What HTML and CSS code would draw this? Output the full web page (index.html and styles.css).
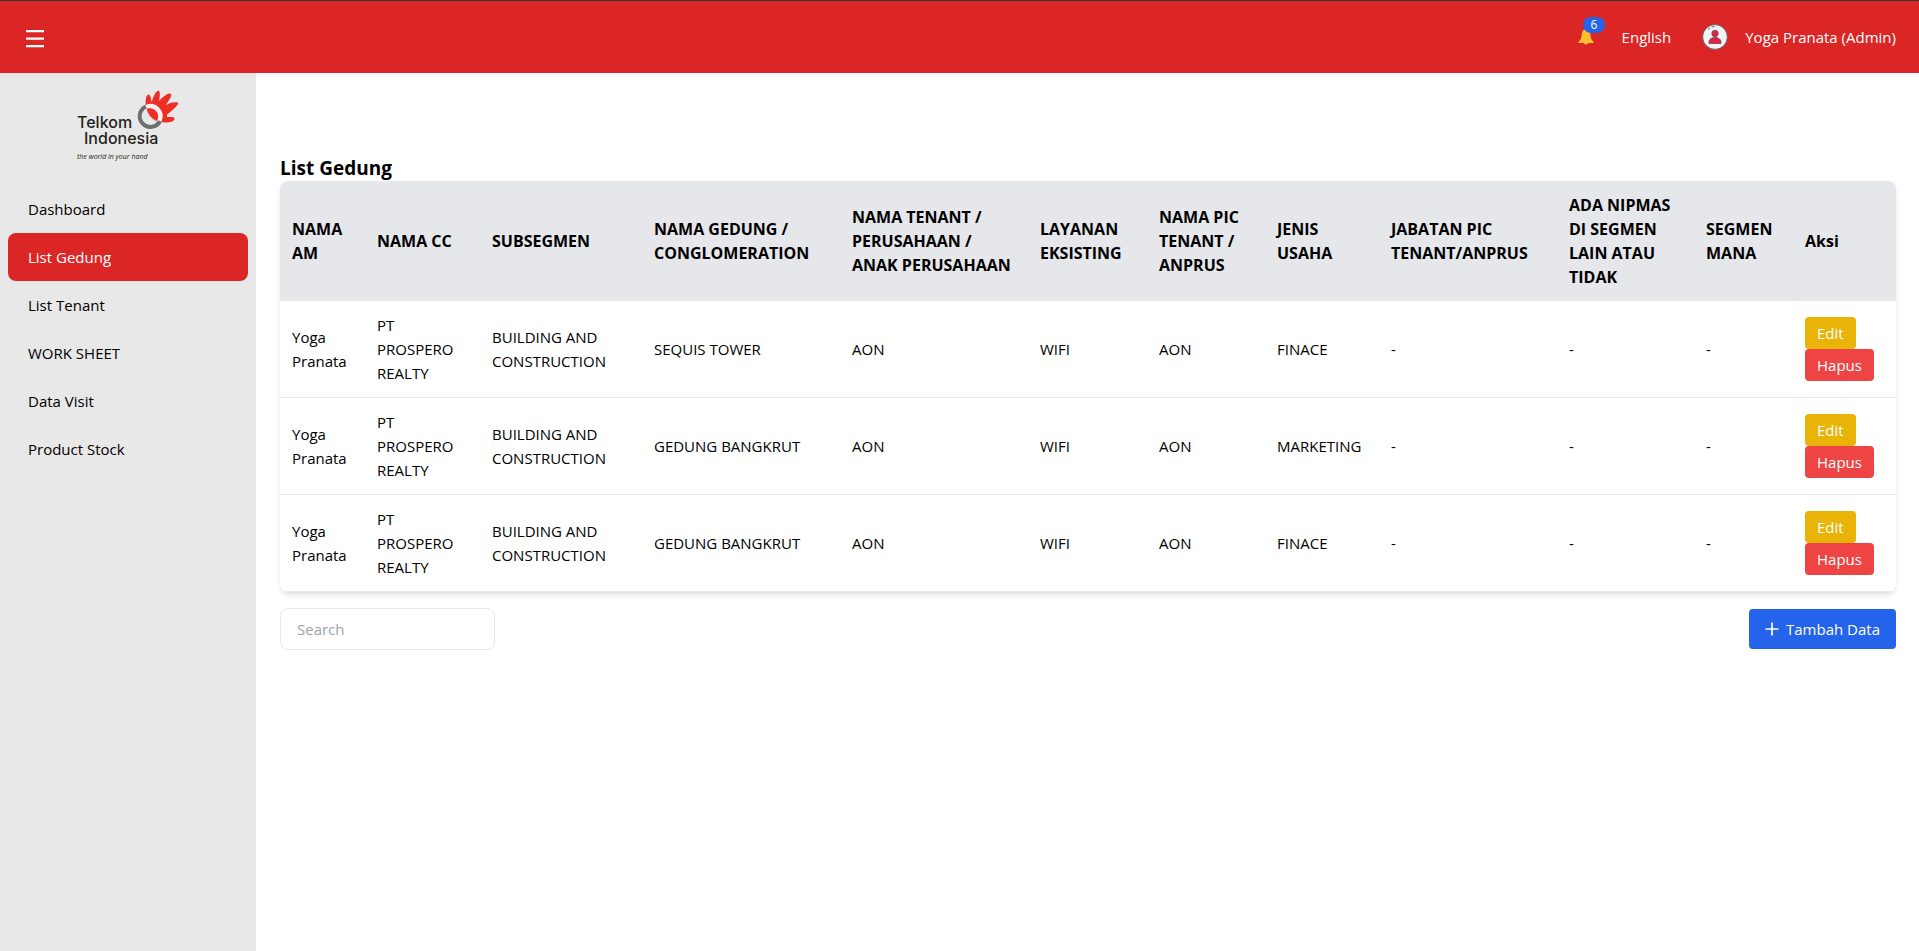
FILE: index.html
```html
<!DOCTYPE html>
<html lang="id">
<head>
<meta charset="utf-8">
<meta name="viewport" content="width=device-width, initial-scale=1">
<title>List Gedung</title>
<link rel="stylesheet" href="styles.css">
</head>
<body>
<header class="topbar">
  <button class="menu-button" type="button" aria-label="Menu">
    <svg width="18" height="18" viewBox="0 0 18 18" fill="#fff"><path d="M0 0h18v2.300H0zM0 7.500h18v2.300H0zM0 15h18v2.300H0z"/></svg>
  </button>
  <div class="topbar-right">
    <button class="bell" type="button" aria-label="Notifications">
      <svg width="16" height="16" viewBox="0 0 16 16"><path fill="#fbc02d" d="M8 0C5 .6 4 2.500 3.700 5.500 3.400 9 3 10.500.6 12.500V14h14.800v-1.500C13 10.500 12.600 9 12.300 5.500 12 2.500 11 .6 8 0z"/><path fill="#fbc02d" d="M6 14h4q-.4 1.500-2 1.500T6 14z"/></svg>
      <span class="badge">6</span>
    </button>
    <a class="topbar-link" href="#">English</a>
    <a class="user" href="#">
      <svg width="26" height="26" viewBox="0 0 26 26"><circle cx="13" cy="13" r="12.400" fill="#f3f3f3" stroke="#56545f" stroke-width=".9"/><path d="M6 5.500 8 4M9.500 3.200l3-.8" stroke="#56545f" stroke-width=".9" fill="none"/><g fill="#e91e43" stroke="#56545f" stroke-width=".8"><circle cx="13" cy="9.500" r="3.200"/><path d="M7 19.500v-1.200c0-3 2.400-4.800 6-4.800s6 1.800 6 4.800v1.200z"/></g></svg>
      <span>Yoga Pranata (Admin)</span>
    </a>
  </div>
</header>
<div class="layout">
  <aside class="sidebar">
    <svg class="logo" width="104" height="72" viewBox="0 0 104 72" role="img" aria-label="Telkom Indonesia">
      <path fill="#ee2d24" d="M69 17C68 11 69 5 71.500 4.500 74 5 73.500 9 74.700 12 76 8 78.500 1.500 81 .8 84 1 82.500 6 82.300 11 85 8 90.500 2.500 93.500 3.800 96 5 92 10 89 15 92 13 97.500 11.500 101 12.500 102 14.500 96.500 19.500 90 24.500V27C93 27 98 26.500 97.500 29 96.500 32.500 89 33 83.500 32L76 22z"/>
      <circle cx="73.500" cy="26" r="11" fill="#f3f3f3"/>
      <circle cx="73.500" cy="26" r="8.800" fill="#e8e8e8"/>
      <path d="M69 16.500A10.700 10.700 0 1 0 83 31" fill="none" stroke="#6d6e71" stroke-width="4"/>
      <path d="M69 16.500A10.700 10.700 0 0 1 83 31" fill="none" stroke="#f3f3f3" stroke-width="3"/>
      <path fill="#ee2d24" d="M69.500 18.500Q77 17 80.500 23 82 28 79.500 31 72 28 69.500 18.500z"/>
      <text class="logo-name" x="0" y="38">Telkom</text>
      <text class="logo-name" x="7" y="54">Indonesia</text>
      <text class="logo-tag" x="0" y="69">the world in your hand</text>
    </svg>
    <nav class="nav">
      <a href="#">Dashboard</a>
      <a class="active" href="#" aria-current="page">List Gedung</a>
      <a href="#">List Tenant</a>
      <a href="#">WORK SHEET</a>
      <a href="#">Data Visit</a>
      <a href="#">Product Stock</a>
    </nav>
  </aside>
  <main class="content">
    <h1 class="title">List Gedung</h1>
    <div class="card">
      <table class="table">
        <colgroup>
          <col class="c-am"><col class="c-cc"><col class="c-sub"><col class="c-gedung"><col class="c-tenant"><col class="c-layanan"><col class="c-pic"><col class="c-jenis"><col class="c-jabatan"><col class="c-nipmas"><col class="c-segmen"><col class="c-aksi">
        </colgroup>
        <thead>
          <tr><th>NAMA AM</th><th>NAMA CC</th><th>SUBSEGMEN</th><th>NAMA GEDUNG / CONGLOMERATION</th><th>NAMA TENANT / PERUSAHAAN /<br>ANAK PERUSAHAAN</th><th>LAYANAN EKSISTING</th><th>NAMA PIC TENANT / ANPRUS</th><th>JENIS USAHA</th><th>JABATAN PIC TENANT/ANPRUS</th><th>ADA NIPMAS DI SEGMEN LAIN ATAU TIDAK</th><th>SEGMEN MANA</th><th>Aksi</th></tr>
        </thead>
        <tbody>
          <tr><td>Yoga Pranata</td><td>PT PROSPERO REALTY</td><td>BUILDING AND CONSTRUCTION</td><td>SEQUIS TOWER</td><td>AON</td><td>WIFI</td><td>AON</td><td>FINACE</td><td>-</td><td>-</td><td>-</td><td><div class="actions"><button class="btn edit" type="button">Edit</button><button class="btn delete" type="button">Hapus</button></div></td></tr>
          <tr><td>Yoga Pranata</td><td>PT PROSPERO REALTY</td><td>BUILDING AND CONSTRUCTION</td><td>GEDUNG BANGKRUT</td><td>AON</td><td>WIFI</td><td>AON</td><td>MARKETING</td><td>-</td><td>-</td><td>-</td><td><div class="actions"><button class="btn edit" type="button">Edit</button><button class="btn delete" type="button">Hapus</button></div></td></tr>
          <tr><td>Yoga Pranata</td><td>PT PROSPERO REALTY</td><td>BUILDING AND CONSTRUCTION</td><td>GEDUNG BANGKRUT</td><td>AON</td><td>WIFI</td><td>AON</td><td>FINACE</td><td>-</td><td>-</td><td>-</td><td><div class="actions"><button class="btn edit" type="button">Edit</button><button class="btn delete" type="button">Hapus</button></div></td></tr>
        </tbody>
      </table>
    </div>
    <div class="footer-row">
      <input class="search" type="text" placeholder="Search" aria-label="Search">
      <button class="add" type="button">
        <svg width="14" height="14" viewBox="0 0 14 14"><path d="M7 .5v13M.5 7h13" stroke="#fff" stroke-width="1.700"/></svg>
        <span>Tambah Data</span>
      </button>
    </div>
  </main>
</div>
</body>
</html>
```
FILE: styles.css
```css
* { box-sizing: border-box; }

body {
  margin: 0;
  min-height: 100vh;
  display: flex;
  flex-direction: column;
  background: #fff;
  color: #000;
  font: 15px/24px "Segoe UI", "Open Sans", "Noto Sans", sans-serif;
}

button, input { font: inherit; }
button { border: 0; cursor: pointer; }
a { color: inherit; text-decoration: none; }
svg { display: block; flex: none; }

.topbar {
  display: flex;
  align-items: center;
  justify-content: space-between;
  height: 73px;
  padding: 0 23px 0 26px;
  border-top: 1px solid #333;
  background: #dc2626;
  color: #fff;
}

.menu-button { padding: 3px 0 0; background: none; }
.topbar-right { display: flex; align-items: center; }

.bell {
  position: relative;
  margin-right: 28px;
  padding: 0;
  background: none;
}

.badge {
  position: absolute;
  top: -12px;
  left: 5px;
  padding: 0 8px;
  border-radius: 8px;
  background: #2563eb;
  color: #fff;
  font-size: 12px;
  line-height: 16px;
}

.topbar-link { margin-right: 31px; }
.user { display: flex; align-items: center; gap: 17px; }

.layout { display: flex; flex: 1; }

.sidebar {
  flex: none;
  width: 256px;
  padding: 17px 8px;
  background: #e8e8e8;
}

.logo { margin: 0 auto 23px 69px; }
.logo-name { fill: #231f20; font: 500 16px Inter, sans-serif; }
.logo-tag { fill: #231f20; font: italic 7px "Open Sans", sans-serif; }

.nav { display: flex; flex-direction: column; }
.nav a { padding: 12px 20px; border-radius: 8px; }
.nav .active { background: #dc2626; color: #fff; }

.content { flex: 1; min-width: 0; padding: 82px 23px 24px 24px; }
.title { margin: 0; font-size: 19px; line-height: 26px; font-weight: 700; }

.card {
  overflow: hidden;
  border-radius: 8px;
  background: #fff;
  box-shadow: 0 4px 6px -1px rgb(0 0 0 / .1), 0 2px 4px -2px rgb(0 0 0 / .1);
}

.table {
  width: 100%;
  table-layout: fixed;
  border-collapse: collapse;
  text-align: left;
}

.table th, .table td { padding: 12px; vertical-align: middle; }
.table th { background: #e5e7eb; font-size: 16px; font-weight: 700; }
.table tbody tr { border-bottom: 1px solid #e5e7eb; }

.c-am { width: 85px; }
.c-cc { width: 115px; }
.c-sub { width: 162px; }
.c-gedung { width: 198px; }
.c-tenant { width: 188px; }
.c-layanan { width: 119px; }
.c-pic { width: 118px; }
.c-jenis { width: 114px; }
.c-jabatan { width: 178px; }
.c-nipmas { width: 137px; }
.c-segmen { width: 99px; }
.c-aksi { width: 103px; }

.actions { display: flex; flex-direction: column; align-items: flex-start; }
.btn { padding: 4px 12px; border-radius: 4px; color: #fff; }
.edit { background: #eab308; }
.delete { background: #ef4444; }

.footer-row {
  display: flex;
  align-items: center;
  justify-content: space-between;
  margin-top: 16px;
}

.search {
  width: 215px;
  padding: 8px 16px;
  border: 1px solid #e5e7eb;
  border-radius: 8px;
  line-height: 24px;
}
.search::placeholder { color: #9ca3af; }

.add {
  display: flex;
  align-items: center;
  gap: 7px;
  padding: 8px 16px;
  border-radius: 4px;
  background: #2563eb;
  color: #fff;
}
```
